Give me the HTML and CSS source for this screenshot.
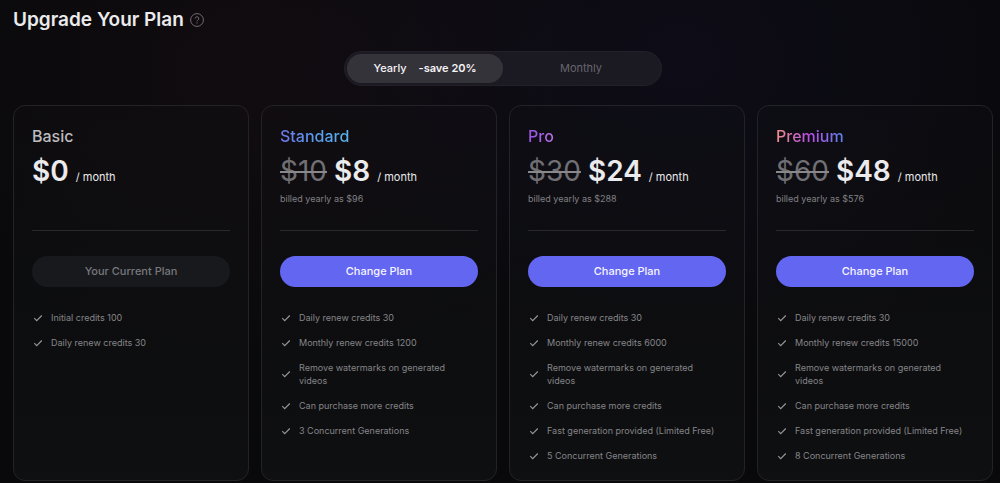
FILE: index.html
```html
<!DOCTYPE html>
<html lang="en">
<head>
<meta charset="utf-8">
<meta name="viewport" content="width=device-width, initial-scale=1">
<title>Upgrade Your Plan</title>
<link rel="stylesheet" href="styles.css">
</head>
<body>
<svg class="sprite" aria-hidden="true">
  <symbol id="check" viewBox="0 0 12 12"><path d="M2.3 6.2 4.7 8.6 9.8 3.5" fill="none" stroke="currentColor" stroke-width="1.1"/></symbol>
</svg>
<main class="page">
  <header class="header">
    <h1 class="title">Upgrade Your Plan</h1>
    <button class="help" type="button" aria-label="Help">
      <svg class="help-icon" viewBox="0 0 14 14" fill="none" stroke="currentColor"><circle cx="7" cy="7" r="6.4"/><path d="M5.2 5.6a1.8 1.8 0 1 1 2.7 1.5c-.6.4-.9.7-.9 1.3"/><path d="M7 9.5v1.1"/></svg>
    </button>
  </header>

  <div class="toggle" role="group" aria-label="Billing period">
    <button class="toggle-option toggle-active" type="button" aria-pressed="true"><span>Yearly</span><span class="saving">-save 20%</span></button>
    <button class="toggle-option" type="button" aria-pressed="false">Monthly</button>
  </div>

  <section class="plans">
    <article class="card">
      <h2 class="name name-basic">Basic</h2>
      <p class="price"><span class="amount">$0</span><span class="period">/ month</span></p>
      <p class="billed"></p>
      <hr class="divider">
      <button class="action" type="button" disabled>Your Current Plan</button>
      <ul class="features">
        <li class="feature"><svg class="check"><use href="#check"/></svg>Initial credits 100</li>
        <li class="feature"><svg class="check"><use href="#check"/></svg>Daily renew credits 30</li>
      </ul>
    </article>

    <article class="card">
      <h2 class="name name-standard">Standard</h2>
      <p class="price"><s class="old">$10</s><span class="amount">$8</span><span class="period">/ month</span></p>
      <p class="billed">billed yearly as $96</p>
      <hr class="divider">
      <button class="action" type="button">Change Plan</button>
      <ul class="features">
        <li class="feature"><svg class="check"><use href="#check"/></svg>Daily renew credits 30</li>
        <li class="feature"><svg class="check"><use href="#check"/></svg>Monthly renew credits 1200</li>
        <li class="feature"><svg class="check"><use href="#check"/></svg>Remove watermarks on generated videos</li>
        <li class="feature"><svg class="check"><use href="#check"/></svg>Can purchase more credits</li>
        <li class="feature"><svg class="check"><use href="#check"/></svg>3 Concurrent Generations</li>
      </ul>
    </article>

    <article class="card">
      <h2 class="name name-pro">Pro</h2>
      <p class="price"><s class="old">$30</s><span class="amount">$24</span><span class="period">/ month</span></p>
      <p class="billed">billed yearly as $288</p>
      <hr class="divider">
      <button class="action" type="button">Change Plan</button>
      <ul class="features">
        <li class="feature"><svg class="check"><use href="#check"/></svg>Daily renew credits 30</li>
        <li class="feature"><svg class="check"><use href="#check"/></svg>Monthly renew credits 6000</li>
        <li class="feature"><svg class="check"><use href="#check"/></svg>Remove watermarks on generated videos</li>
        <li class="feature"><svg class="check"><use href="#check"/></svg>Can purchase more credits</li>
        <li class="feature"><svg class="check"><use href="#check"/></svg>Fast generation provided (Limited Free)</li>
        <li class="feature"><svg class="check"><use href="#check"/></svg>5 Concurrent Generations</li>
      </ul>
    </article>

    <article class="card">
      <h2 class="name name-premium">Premium</h2>
      <p class="price"><s class="old">$60</s><span class="amount">$48</span><span class="period">/ month</span></p>
      <p class="billed">billed yearly as $576</p>
      <hr class="divider">
      <button class="action" type="button">Change Plan</button>
      <ul class="features">
        <li class="feature"><svg class="check"><use href="#check"/></svg>Daily renew credits 30</li>
        <li class="feature"><svg class="check"><use href="#check"/></svg>Monthly renew credits 15000</li>
        <li class="feature"><svg class="check"><use href="#check"/></svg>Remove watermarks on generated videos</li>
        <li class="feature"><svg class="check"><use href="#check"/></svg>Can purchase more credits</li>
        <li class="feature"><svg class="check"><use href="#check"/></svg>Fast generation provided (Limited Free)</li>
        <li class="feature"><svg class="check"><use href="#check"/></svg>8 Concurrent Generations</li>
      </ul>
    </article>
  </section>
</main>
</body>
</html>
```

FILE: styles.css
```css
* {
  box-sizing: border-box;
}

body {
  margin: 0;
  min-height: 100vh;
  font-family: Inter, "Liberation Sans", sans-serif;
  color: #ebeaec;
  background:
    radial-gradient(ellipse 34% 60% at 26% 15%, rgba(44, 22, 34, 0.24), transparent),
    radial-gradient(ellipse 40% 66% at 68% 12%, rgba(26, 22, 56, 0.28), transparent),
    #09090b;
}

h1, h2, p, ul {
  margin: 0;
  padding: 0;
}

button {
  border: 0;
  padding: 0;
  font: inherit;
  color: inherit;
  background: none;
  cursor: pointer;
}

.sprite {
  display: none;
}

.page {
  padding: 8px 7px 3px 13px;
}

.header {
  display: flex;
  align-items: center;
  gap: 6px;
}

.title {
  font-size: 19px;
  line-height: 24px;
  font-weight: 600;
}

.help {
  display: flex;
  color: #6f6c73;
}

.help-icon {
  width: 14px;
  height: 14px;
}

.toggle {
  display: grid;
  grid-template-columns: 1fr 1fr;
  width: 318px;
  margin: 19px auto;
  padding: 2px;
  border: 1px solid #232029;
  border-radius: 18px;
  background: #1b1922;
}

.toggle-option {
  display: flex;
  align-items: center;
  justify-content: center;
  gap: 12px;
  border-radius: 15px;
  font-size: 11px;
  line-height: 29px;
  color: #67656c;
}

.toggle-active {
  color: #f5f4f6;
  background: #35333a;
  font-weight: 500;
}

.saving {
  font-weight: 600;
}

.plans {
  display: grid;
  grid-template-columns: repeat(4, 1fr);
  gap: 12px;
}

.card {
  display: flex;
  flex-direction: column;
  padding: 18px;
  border: 1px solid #232227;
  border-radius: 12px;
  background: linear-gradient(rgba(18, 18, 22, 0.2), rgba(17, 18, 20, 0.7));
}

.name {
  align-self: flex-start;
  font-size: 16px;
  line-height: 24px;
  font-weight: 500;
  color: transparent;
  background-clip: text;
}

.name-basic {
  color: #bcbbbe;
}

.name-standard {
  background-image: linear-gradient(90deg, #6f78ee, #5b9bee 50%, #58b4ec);
}

.name-pro {
  background-image: linear-gradient(90deg, #9552e4, #b671e6);
}

.name-premium {
  background-image: linear-gradient(90deg, #f0908a, #b94ee6 50%, #5b83ee);
}

.price {
  display: flex;
  align-items: baseline;
  gap: 7px;
  margin-top: 5px;
  font-size: 28px;
  line-height: 36px;
}

.amount {
  font-weight: 600;
}

.old {
  color: #706f73;
  text-decoration-color: #89888b;
}

.period {
  font-size: 11px;
  line-height: 16px;
}

.billed {
  height: 14px;
  margin-top: 3px;
  font-size: 9px;
  line-height: 14px;
  color: #818084;
}

.divider {
  align-self: stretch;
  margin: 24px 0 25px;
  border: 0;
  border-top: 1px solid #29282d;
}

.action {
  border-radius: 16px;
  font-size: 11px;
  line-height: 31px;
  font-weight: 500;
  color: #f7f6ff;
  background: #6366f1;
}

.action:disabled {
  color: #77787b;
  background: #18191d;
  cursor: default;
}

.features {
  display: grid;
  gap: 12px;
  margin-top: 24px;
  list-style: none;
}

.feature {
  display: grid;
  grid-template-columns: 12px 1fr;
  align-items: center;
  gap: 7px;
  padding-right: 4px;
  font-size: 9px;
  line-height: 13px;
  color: #858588;
}

.check {
  width: 12px;
  height: 12px;
  color: #98989b;
}
```
